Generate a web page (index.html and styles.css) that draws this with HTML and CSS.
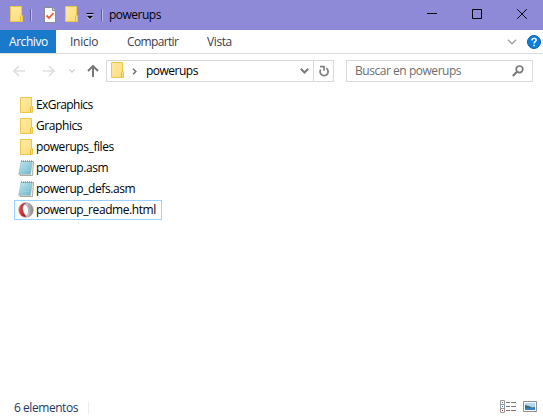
FILE: index.html
```html
<!DOCTYPE html>
<html lang="es">
<head>
<meta charset="utf-8">
<title>powerups</title>
<link rel="stylesheet" href="styles.css">
</head>
<body>
<svg class="defs" width="0" height="0">
  <defs>
    <linearGradient id="fold" x1="0" y1="0" x2="1" y2="1"><stop offset="0" stop-color="#ffeaa3"/><stop offset="1" stop-color="#fddd7b"/></linearGradient>
    <linearGradient id="note" x1="0" y1="0" x2="1" y2="1"><stop offset="0" stop-color="#c4eaf2"/><stop offset="1" stop-color="#68b2ca"/></linearGradient>
    <linearGradient id="ring" x1="0" y1="0" x2="1" y2="0"><stop offset="0" stop-color="#ef5357"/><stop offset=".45" stop-color="#ad0712"/><stop offset=".5" stop-color="#ccc"/><stop offset="1" stop-color="#888"/></linearGradient>
    <symbol id="folder" viewBox="0 0 13 16">
      <path d="M.5.5h11v9h1v6H.5z" fill="url(#fold)" stroke="#edc64c"/>
      <path d="M10.500 15v-4.500l1-1" fill="none" stroke="#e5b936"/>
    </symbol>
    <symbol id="notepad" viewBox="0 0 16 16">
      <path d="M4 1.500h11.500L14.500 15.500H2z" fill="#f7f4df" stroke="#98958a" stroke-width=".8"/>
      <path d="M3.200 1.500h11L12.500 14.300H.700z" fill="url(#note)" stroke="#8fb9c5" stroke-width=".6"/>
      <path d="M3.500 5.500h9M3 8h9M2.500 10.500h9" stroke="#9bd3e2" stroke-width=".7"/>
      <path d="M3 1h11.500" stroke="#5d6d73" stroke-width="1.200" stroke-dasharray="1 1"/>
    </symbol>
  </defs>
</svg>
<div class="window">
  <header class="titlebar">
    <svg class="folder"><use href="#folder"/></svg>
    <i class="bar first"></i>
    <svg class="props" viewBox="0 0 12 16"><path d="M.5.5h8l3 3v12H.5z" fill="#fafafa" stroke="#8c8c8c"/><path d="M8.500.5v3h3" fill="#ddd" stroke="#8c8c8c"/><path d="M2.500 8.500L5 11l4.500-5" fill="none" stroke="#ea5b2b" stroke-width="1.800"/></svg>
    <svg class="folder"><use href="#folder"/></svg>
    <svg class="more" viewBox="0 0 8 8"><path d="M.5 2h7M1.500 5h5L4 7.500z" stroke="#e2e0f5" fill="#e2e0f5"/><path d="M.5 1h7v1h-7zM1 4h6L4 7z"/></svg>
    <i class="bar second"></i>
    <span class="title">powerups</span>
    <div class="controls">
      <svg viewBox="0 0 10 10"><path d="M0 4.500h10"/></svg>
      <svg viewBox="0 0 10 10"><path d="M.5.5h9v9h-9z"/></svg>
      <svg viewBox="0 0 10 10"><path d="M.2.2l9.600 9.600M9.800.2L.2 9.800"/></svg>
    </div>
  </header>
  <nav class="ribbon">
    <span class="file">Archivo</span>
    <span class="tab inicio">Inicio</span>
    <span class="tab compartir">Compartir</span>
    <span class="tab vista">Vista</span>
    <svg class="expand" viewBox="0 0 10 6"><path d="M1 .8l4 4 4-4" fill="none" stroke="#a0a0a0" stroke-width="1.300"/></svg>
    <svg class="help" viewBox="0 0 14 14"><circle cx="7" cy="7" r="6.500" fill="#0b7fdd" stroke="#075faf"/><path d="M5 5.400C5 2.700 9.200 2.800 9.200 5.100 9.200 6.700 7.100 6.700 7.100 8.500M7.100 9.700v1.600" fill="none" stroke="#fff" stroke-width="1.500"/></svg>
  </nav>
  <div class="address">
    <svg class="arrow" viewBox="0 0 12 12"><path d="M12 6H1M6 1L1 6l5 5" stroke="#dfdfdf"/></svg>
    <svg class="arrow fwd" viewBox="0 0 12 12"><path d="M0 6h11M6 1l5 5-5 5" stroke="#dfdfdf"/></svg>
    <svg class="recent" viewBox="0 0 6 4"><path d="M.5.5L3 3 5.500.5" stroke="#ccc" stroke-width="1.300"/></svg>
    <svg class="up" viewBox="0 0 12 12"><path d="M6 12V1M1 6l5-5 5 5" stroke="#777" stroke-width="2"/></svg>
    <div class="path">
      <svg class="folder"><use href="#folder"/></svg>
      <svg class="crumb" viewBox="0 0 5 7"><path d="M1 .7l2.800 2.800L1 6.300" stroke="#707070" stroke-width="1.500"/></svg>
      <span class="where">powerups</span>
      <svg class="drop" viewBox="0 0 9 6"><path d="M.8.8l3.700 3.700L8.200.8" stroke="#7c7c7c" stroke-width="2"/></svg>
      <span class="refresh"><svg viewBox="0 0 11 12"><path d="M1.700 4.500A4 4 0 1 0 7.200 3.200M1 1.600h4v4.200" stroke="#808080" stroke-width="1.700"/></svg></span>
    </div>
    <div class="search"><span>Buscar en powerups</span><svg viewBox="0 0 12 12"><circle cx="7.500" cy="4.300" r="3.300" stroke="#777" stroke-width="1.700"/><path d="M5 6.800L.8 11" stroke="#777" stroke-width="2"/></svg></div>
  </div>
  <main class="files">
    <div class="item"><svg class="folder"><use href="#folder"/></svg><span class="tight">ExGraphics</span></div>
    <div class="item"><svg class="folder"><use href="#folder"/></svg><span>Graphics</span></div>
    <div class="item"><svg class="folder"><use href="#folder"/></svg><span>powerups_files</span></div>
    <div class="item"><svg class="doc"><use href="#notepad"/></svg><span>powerup.asm</span></div>
    <div class="item"><svg class="doc"><use href="#notepad"/></svg><span>powerup_defs.asm</span></div>
    <div class="item focused"><svg class="doc" viewBox="0 0 16 16"><circle cx="8" cy="8" r="7.300" fill="url(#ring)" stroke="#a88" stroke-width=".6"/><ellipse cx="8.300" cy="8" rx="3.300" ry="6.100" fill="#fff" stroke="#999" stroke-width=".7" transform="rotate(-12 8 8)"/><path d="M7.500 2.700c3.500 2 4 8 1.800 10.500" fill="none" stroke="#aaa"/></svg><span>powerup_readme.html</span></div>
  </main>
  <footer class="status">
    <span class="count">6 elementos</span><i></i>
    <svg class="details" viewBox="0 0 16 13"><path d="M.5.5h4v12h-4zM.5 4.500h4M.5 8.500h4" fill="#fff" stroke="#9a9a9a"/><path d="M6 2.500h4m1 0h5M6 6.500h4m1 0h5M6 10.500h4m1 0h5" stroke="#777"/><path d="M2 2.500h1" stroke="#3a8a65"/><path d="M2 6.500h1" stroke="#1682e8"/><path d="M2 10.500h1" stroke="#d22"/></svg>
    <svg class="thumbs" viewBox="0 0 14 11"><path d="M.5.5h13v10H.5z" fill="#fff" stroke="#8f8f8f"/><path d="M2 2h10v7H2z" fill="#b3d8f4"/><path d="M2 4l4 1 3 1.500 3-.5v1H2z" fill="#396f75"/><path d="M2 7h10v2H2z" fill="#357fc6"/></svg>
  </footer>
</div>
</body>
</html>
```
FILE: styles.css
```css
* { box-sizing: border-box; }
body { margin: 0; background: #fff; color: #000; font: 12px/16px "Open Sans", "Noto Sans", sans-serif; overflow: hidden; }
svg { display: block; flex: none; fill: none; }
.defs { position: absolute; }
span { white-space: nowrap; }
.window { width: 543px; height: 417px; display: flex; flex-direction: column; }
.folder { width: 13px; height: 16px; }
.doc { width: 16px; height: 16px; }

.titlebar { height: 30px; background: #8f8ad8; display: flex; align-items: center; padding-left: 10px; flex: none; }
.titlebar .folder { margin-top: -2px; }
.bar { width: 2px; height: 12px; margin-top: -1px; background: linear-gradient(90deg, #625e9b 50%, #c0bcec 50%); flex: none; }
.first { margin-left: 7px; margin-right: 12px; }
.props { width: 12px; height: 16px; margin-right: 9px; }
.more { width: 8px; height: 8px; margin: 2px 7px 0 8px; fill: #000; }
.second { margin-right: 6px; }
.title { letter-spacing: -.5px; }
.controls { margin-left: auto; display: flex; gap: 35px; padding-right: 16px; margin-top: -2px; }
.controls svg { width: 10px; height: 10px; stroke: #000; }

.ribbon { height: 24px; border-bottom: 1px solid #dcdcdc; display: flex; align-items: center; flex: none; color: #3b3b4b; }
.file { width: 56px; height: 23px; background: #1979ca; color: #fff; padding: 4px 0 0 9px; letter-spacing: -.45px; }
.inicio { margin-left: 14px; width: 57px; letter-spacing: -.25px; }
.compartir { width: 80px; letter-spacing: -.65px; }
.vista { letter-spacing: -.4px; }
.expand { width: 10px; height: 6px; margin-left: auto; }
.help { width: 14px; height: 14px; margin: 0 2px 0 10px; }

.address { display: flex; align-items: center; padding: 6px 10px 0 13px; height: 28px; flex: none; }
.arrow { width: 12px; height: 12px; stroke-width: 1.6; }
.fwd { margin-left: 18px; }
.recent { width: 6px; height: 4px; margin-left: 14px; }
.up { width: 12px; height: 12px; margin-left: 12px; }
.path { width: 228px; height: 22px; margin-left: 7px; border: 1px solid #d9d9d9; display: flex; align-items: center; padding-left: 4px; }
.path .folder { margin-top: -2px; }
.crumb { width: 5px; height: 7px; margin: 0 9px 0 8px; }
.where { letter-spacing: -.5px; }
.drop { width: 9px; height: 6px; margin-left: auto; margin-right: 4px; }
.refresh { width: 20px; height: 20px; border-left: 1px solid #d9d9d9; padding: 4px 0 0 5px; }
.refresh svg { width: 11px; height: 12px; }
.search { width: 187px; height: 22px; margin-left: 12px; border: 1px solid #d9d9d9; color: #6d6d6d; display: flex; align-items: center; justify-content: space-between; padding: 0 8px; letter-spacing: -.46px; }
.search svg { width: 12px; height: 12px; }

.files { padding: 13px 0 0 14px; display: flex; flex-direction: column; align-items: flex-start; gap: 1px; flex: 1; }
.item { height: 20px; display: flex; align-items: center; padding-left: 6px; letter-spacing: -.42px; }
.item .folder { margin-right: 3px; }
.item .doc { margin: 0 2px 0 -2px; }
.item .tight { letter-spacing: -.58px; }
.focused { width: 148px; border: 1px solid #99d1ff; padding-left: 5px; }

.status { height: 22px; padding: 0 6px 0 14px; display: flex; align-items: center; flex: none; color: #1e3966; }
.count { width: 74px; margin-top: 4px; letter-spacing: -.45px; }
.status i { width: 1px; height: 12px; margin-top: 3px; background: #ededed; }
.details { width: 16px; height: 13px; margin: 1px 0 0 auto; }
.thumbs { width: 14px; height: 11px; margin: 1px 0 0 7px; }
```
